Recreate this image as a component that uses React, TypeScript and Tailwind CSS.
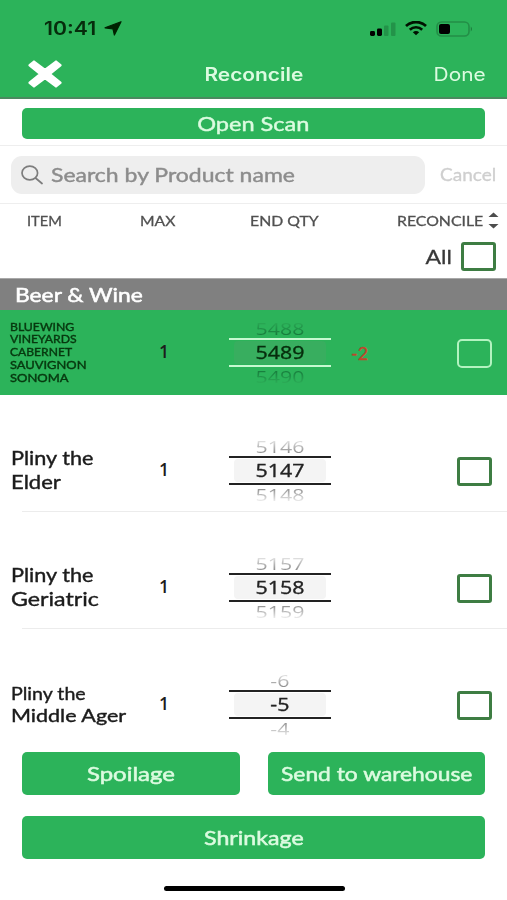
import React from "react";

type Product = {
  name: string[];
  max: number;
  wheel: [string, string, string];
  diff?: string;
  highlighted?: boolean;
  nameClass: string;
  lineClasses: string[];
  rowClass: string;
};

const products: Product[] = [
  {
    name: ["BLUEWING", "VINEYARDS", "CABERNET", "SAUVIGNON", "SONOMA"],
    max: 1,
    wheel: ["5488", "5489", "5490"],
    diff: "-2",
    highlighted: true,
    nameClass: "text-[11px] leading-[12.8px] [-webkit-text-stroke:0.4px] text-[#07380f] pt-[2px]",
    lineClasses: ["scale-x-[1.11]", "scale-x-[1.11]", "scale-x-[1.1]", "scale-x-[1.17]", "scale-x-[1.18]"],
    rowClass: "h-[85px] bg-[#2cb35a]",
  },
  {
    name: ["Pliny the", "Elder"],
    max: 1,
    wheel: ["5146", "5147", "5148"],
    nameClass: "text-[19px] leading-[23.5px] [-webkit-text-stroke:0.4px] text-[#1c1c1c]",
    lineClasses: ["scale-x-[1.14]", "scale-x-[1.16]"],
    rowClass: "h-[117px] pt-[33px]",
  },
  {
    name: ["Pliny the", "Geriatric"],
    max: 1,
    wheel: ["5157", "5158", "5159"],
    nameClass: "text-[19px] leading-[23.5px] [-webkit-text-stroke:0.4px] text-[#1c1c1c]",
    lineClasses: ["scale-x-[1.14]", "scale-x-[1.22]"],
    rowClass: "h-[117px] pt-[33px]",
  },
  {
    name: ["Pliny the", "Middle Ager"],
    max: 1,
    wheel: ["-6", "-5", "-4"],
    nameClass: "text-[17.5px] leading-[22px] [-webkit-text-stroke:0.4px] text-[#1c1c1c] pt-[2px]",
    lineClasses: ["scale-x-[1.12]", "scale-x-[1.23]"],
    rowClass: "h-[117px] pt-[33px]",
  },
];

function Wheel({ values, highlighted }: { values: string[]; highlighted?: boolean }) {
  const line = highlighted ? "border-[#c6f9d0]" : "border-[#222]";
  const fade = highlighted
    ? "from-[#2cad57] from-15% to-[#15783a] to-90%"
    : "from-[#ededed] from-15% to-[#8a8a8a] to-90%";
  return (
    <div className="flex w-[102px] flex-col items-center font-['Open_Sans',sans-serif] text-[17.5px]">
      <div className="flex h-[20px] w-full items-center justify-center">
        <span
          className={
            "block origin-center scale-x-[1.22] scale-y-[0.96] bg-linear-to-b bg-clip-text leading-[20px] [-webkit-text-fill-color:transparent] " +
            fade
          }
        >
          {values[0]}
        </span>
      </div>
      <div className={"flex h-[29px] w-full justify-center border-y-2 py-px " + line}>
        <div
          className={
            "flex w-[92px] items-center justify-center rounded-[4px] pt-px " +
            (highlighted ? "bg-[#38ae5f] text-[#062c0c]" : "bg-[#f4f4f4] text-[#222]")
          }
        >
          <span className="scale-x-[1.22] [-webkit-text-stroke:0.35px]">{values[1]}</span>
        </div>
      </div>
      <div className="flex h-[20px] w-full items-center justify-center pt-px">
        <span
          className={
            "block origin-center scale-x-[1.22] scale-y-[0.92] bg-linear-to-t bg-clip-text leading-[20px] [-webkit-text-fill-color:transparent] " +
            fade
          }
        >
          {values[2]}
        </span>
      </div>
    </div>
  );
}

function Row({ product, last }: { product: Product; last?: boolean }) {
  const { highlighted } = product;
  return (
    <div className={"shrink-0 " + product.rowClass}>
      <div className="flex h-[83px] items-center">
        <div className={"w-[155px] " + (highlighted ? "pl-[10px] " : "pl-[11px] ") + product.nameClass}>
          {product.name.map((line, i) => (
            <div key={line} className={"w-fit origin-left whitespace-nowrap " + product.lineClasses[i]}>
              {line}
            </div>
          ))}
        </div>
        <div className="w-[18px] text-center font-['Open_Sans',sans-serif] text-[17.5px] font-semibold text-[#1c1c1c]">
          {product.max}
        </div>
        <div className="ml-[56px] mt-px">
          <Wheel values={product.wheel} highlighted={highlighted} />
        </div>
        <div className="ml-[20px] mt-[3px] w-[50px] text-[18px] text-[#c0452b] [-webkit-text-stroke:0.3px]">{product.diff}</div>
        <div
          className={
            "ml-auto mr-[15px] mt-[3px] h-[29px] w-[35px] " +
            (highlighted ? "rounded-[5px] border-2 border-[#b3f3c0]" : "rounded-[3px] border-3 border-[#3e7d43]")
          }
        />
      </div>
      {!highlighted && !last && <div className="ml-[22px] h-px bg-[#ececec]" />}
    </div>
  );
}

export default function App() {
  return (
    <div className="flex h-[900px] w-[507px] flex-col overflow-hidden bg-white font-['Lato','Open_Sans',sans-serif]">
      <header className="h-[99px] shrink-0 border-b-2 border-[#4b8a60] bg-[#2cb35a] font-['Inter',sans-serif]">
        <div className="flex h-[50px] items-center pl-[44px] pr-[34px] pt-[7px]">
          <span className="w-[54px] origin-left scale-x-[1.18] text-[18px] font-semibold text-[#062c0c]">10:41</span>
          <svg className="ml-[6px]" width="18" height="15" viewBox="0 0 18 15" fill="#020">
            <path d="M17 0.7 L10.4 14 L9 8 L1 6.8 Z" stroke="#020" strokeWidth="1.2" strokeLinejoin="round" />
          </svg>
          <div className="ml-auto flex items-center">
            <svg width="27" height="14" viewBox="0 0 27 14">
              <rect x="1" y="9" width="5" height="5" rx="1.4" fill="#000" />
              <rect x="8" y="6.5" width="5" height="7.5" rx="1.4" fill="#000" />
              <rect x="15" y="3.5" width="4.5" height="10.5" rx="1" fill="#239349" />
              <rect x="22" y="0.5" width="4.5" height="13.5" rx="1" fill="#239349" />
            </svg>
            <svg className="ml-[9px]" width="22" height="15" viewBox="0 0 22 15" fill="none" stroke="#010" strokeWidth="2.7">
              <path d="M1 5 C6.5 -0.3 15.5 -0.3 21 5" />
              <path d="M4.8 8.7 C8.3 5.4 13.7 5.4 17.2 8.7" />
              <path d="M7.8 11.2 Q11 8.7 14.2 11.2 L11 14.3 Z" fill="#010" stroke="none" />
            </svg>
            <svg className="ml-[9px]" width="37" height="16" viewBox="0 0 37 16">
              <rect x="1" y="1" width="32" height="14" rx="4.5" fill="none" stroke="#238e47" strokeWidth="1.6" />
              <rect x="3" y="3" width="11" height="10" rx="2" fill="#000" />
              <path d="M34.8 5.5 Q37 8 34.8 10.5 Z" fill="#1c7439" />
            </svg>
          </div>
        </div>
        <div className="grid h-[48px] grid-cols-3 items-center pl-[28px] pr-[21px] text-[18px] text-[#dcfbe0]">
          <svg width="34" height="28" viewBox="0 0 34 28" fill="#fff" stroke="#fff" strokeWidth="2.4" strokeLinejoin="round">
            <path d="M6 1.6 L17 10 L28 1.6 L32.4 5.2 L21.6 14 L32.4 22.8 L28 26.4 L17 18 L6 26.4 L1.6 22.8 L12.4 14 L1.6 5.2 Z" />
          </svg>
          <span className="mr-[7px] scale-x-[1.16] text-center font-semibold">Reconcile</span>
          <span className="origin-right scale-x-[1.16] text-right">Done</span>
        </div>
      </header>

      <div className="flex h-[47px] shrink-0 items-start border-b border-[#eee] px-[22px] pt-[9px]">
        <button className="flex h-[31px] w-[464px] items-center justify-center rounded-[5px] bg-[#2cb35a] pt-px text-[19px] text-[#dcfbe0] [-webkit-text-stroke:0.4px]">
          <span className="scale-x-[1.24]">Open Scan</span>
        </button>
      </div>

      <div className="flex h-[58px] shrink-0 items-center border-b border-[#eee] pl-[11px]">
        <div className="flex h-[38px] w-[414px] items-center rounded-[11px] bg-[#eee] pl-[10px] text-[19px] text-[#8c8c8c] [-webkit-text-stroke:0.4px]">
          <svg width="22" height="20" viewBox="0 0 22 20" fill="none" stroke="#7d7d7d" strokeWidth="1.7" strokeLinecap="round">
            <ellipse cx="8.8" cy="8" rx="7.8" ry="6.8" />
            <path d="M14.5 13 L21 18.5" />
          </svg>
          <span className="ml-[8px] mt-[2px] origin-left scale-x-[1.21] whitespace-nowrap">Search by Product name</span>
        </div>
        <span className="ml-[15px] origin-left scale-x-[1.12] text-[17px] text-[#cfcfcf] [-webkit-text-stroke:0.3px]">Cancel</span>
      </div>

      <div className="h-[74px] shrink-0 text-[14px] text-[#505050] [-webkit-text-stroke:0.3px]">
        <div className="flex h-[33px] items-center">
          <span className="ml-[27px] w-[113px] origin-left scale-x-[1.05]">ITEM</span>
          <span className="w-[110px] origin-left scale-x-[1.12]">MAX</span>
          <span className="w-[147px] origin-left scale-x-[1.13]">END QTY</span>
          <span className="w-[91px] origin-left scale-x-[1.13]">RECONCILE</span>
          <svg width="11" height="17" viewBox="0 0 11 17" fill="#4d4d4d">
            <path d="M0.5 5 L5.5 0.5 L10.5 5 Z M0.5 12 L5.5 16.5 L10.5 12 Z" />
          </svg>
        </div>
        <div className="flex h-[40px] items-center justify-end pr-[11px]">
          <span className="mr-[9px] mt-[-2px] origin-right scale-x-[1.15] text-[20px] text-[#383838]">All</span>
          <div className="mt-[-2px] h-[29px] w-[35px] rounded-[3px] border-3 border-[#3e7d43]" />
        </div>
      </div>

      <div className="flex h-[32px] shrink-0 items-center border-t border-[#a8a8a8] bg-[#808080] pl-[15px] pt-px text-[19px] text-white [-webkit-text-stroke:0.5px]">
        <span className="origin-left scale-x-[1.2]">Beer &amp; Wine</span>
      </div>

      <main className="flex h-[442px] shrink-0 flex-col overflow-hidden">
        {products.map((p, i) => (
          <Row key={p.wheel[1]} product={p} last={i === products.length - 1} />
        ))}
      </main>

      <footer className="flex flex-1 flex-col px-[22px] text-[19px] text-[#dcfbe0] [-webkit-text-stroke:0.5px]">
        <div className="flex gap-[28px]">
          <button className="flex h-[43px] w-[218px] items-center justify-center rounded-[5px] bg-[#2cb35a] pt-[2px]">
            <span className="scale-x-[1.26]">Spoilage</span>
          </button>
          <button className="flex h-[43px] w-[218px] items-center justify-center rounded-[5px] bg-[#2cb35a] pt-[2px]">
            <span className="scale-x-[1.2] whitespace-nowrap">Send to warehouse</span>
          </button>
        </div>
        <button className="mt-[21px] flex h-[43px] items-center justify-center rounded-[5px] bg-[#2cb35a] pt-px">
          <span className="scale-x-[1.22]">Shrinkage</span>
        </button>
        <div className="ml-[142px] mt-[27px] h-[5px] w-[181px] rounded-full bg-black" />
      </footer>
    </div>
  );
}
